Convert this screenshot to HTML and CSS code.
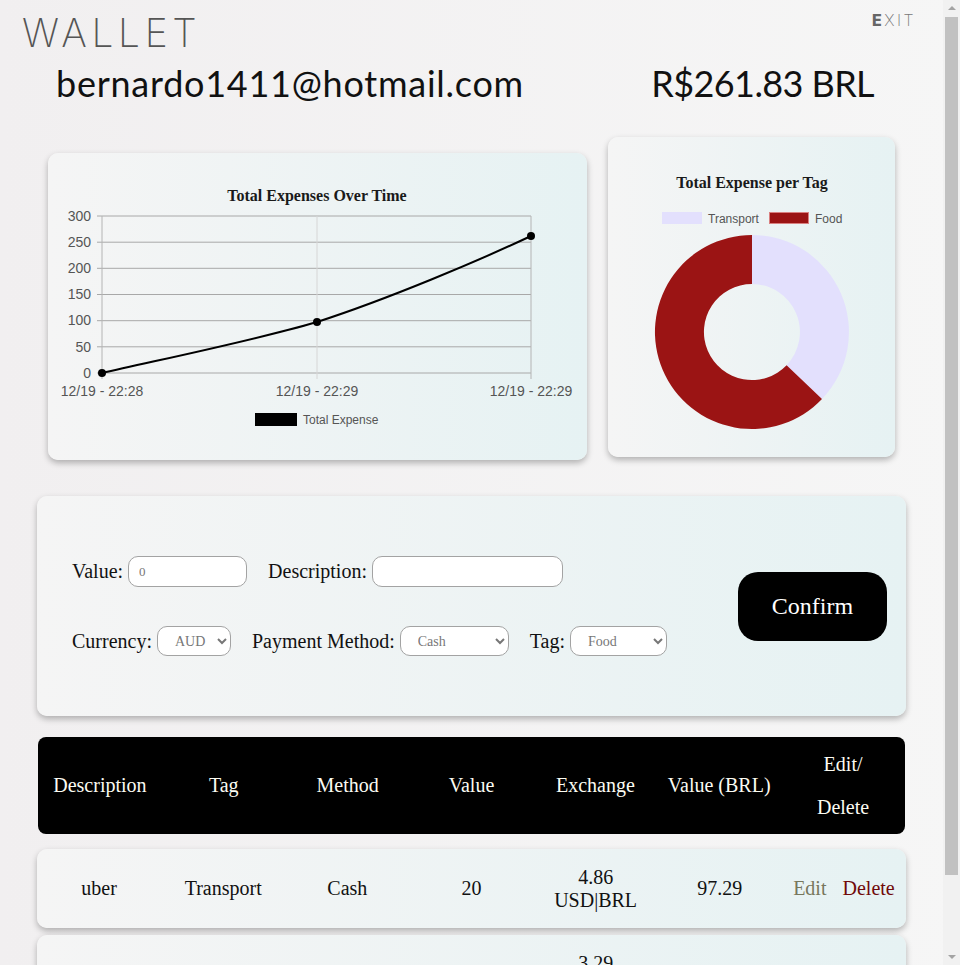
FILE: index.html
```html
<!DOCTYPE html>
<html lang="en">
<head>
<meta charset="utf-8">
<title>Wallet</title>
<link rel="stylesheet" href="styles.css">
</head>
<body>
<main class="page">
<header class="top">
  <h1 class="logo">WALLET</h1>
  <button class="exit" type="button">EXIT</button>
</header>

<section class="summary">
  <p class="email">bernardo1411@hotmail.com</p>
  <p class="total">R$261.83 BRL</p>
</section>

<section class="charts">
  <div class="card chart-line">
    <svg width="539" height="307" viewBox="0 0 539 307">
      <text x="269" y="48" class="chart-title" text-anchor="middle">Total Expenses Over Time</text>
      <g class="grid-h">
        <line x1="49" y1="63" x2="483" y2="63"/>
        <line x1="49" y1="89.2" x2="483" y2="89.2"/>
        <line x1="49" y1="115.3" x2="483" y2="115.3"/>
        <line x1="49" y1="141.5" x2="483" y2="141.5"/>
        <line x1="49" y1="167.7" x2="483" y2="167.7"/>
        <line x1="49" y1="193.8" x2="483" y2="193.8"/>
        <line x1="49" y1="220" x2="483" y2="220"/>
      </g>
      <g class="grid-v">
        <line x1="54" y1="63" x2="54" y2="226" class="edge"/>
        <line x1="269" y1="63" x2="269" y2="226"/>
        <line x1="483" y1="63" x2="483" y2="226" class="edge"/>
      </g>
      <g class="tick" text-anchor="end">
        <text x="43" y="68">300</text>
        <text x="43" y="94">250</text>
        <text x="43" y="120">200</text>
        <text x="43" y="146">150</text>
        <text x="43" y="172">100</text>
        <text x="43" y="199">50</text>
        <text x="43" y="225">0</text>
      </g>
      <g class="tick" text-anchor="middle">
        <text x="54" y="243">12/19 - 22:28</text>
        <text x="269" y="243">12/19 - 22:29</text>
        <text x="483" y="243">12/19 - 22:29</text>
      </g>
      <path class="data-line" d="M54 220 C110 207 200 189 269 169 C340 146 430 108 483 83"/>
      <circle cx="54" cy="220" r="4"/>
      <circle cx="269" cy="169" r="4"/>
      <circle cx="483" cy="83" r="4"/>
      <rect x="207" y="260" width="42" height="13" fill="#000"/>
      <text x="255" y="271" class="legend">Total Expense</text>
    </svg>
  </div>
  <div class="card chart-donut">
    <svg width="287" height="320" viewBox="0 0 287 320">
      <text x="144" y="51" class="chart-title" text-anchor="middle">Total Expense per Tag</text>
      <rect x="54" y="75" width="40" height="12" fill="#e3e0fd"/>
      <text x="100" y="86" class="legend">Transport</text>
      <rect x="161.5" y="75.5" width="39" height="11" fill="#9b1414" stroke="#d98080"/>
      <text x="207" y="86" class="legend">Food</text>
      <path fill="#e3e0fd" d="M144 98 A97 97 0 0 1 214 262.1 L178.6 228.2 A48 48 0 0 0 144 147 Z"/>
      <path fill="#9b1414" d="M214 262.1 A97 97 0 1 1 144 98 L144 147 A48 48 0 1 0 178.6 228.2 Z"/>
    </svg>
  </div>
</section>

<form class="card expense-form">
  <div class="fields">
    <div class="field-row">
      <label class="field">Value: <input class="input input-value" type="text" value="0"></label>
      <label class="field">Description: <input class="input input-desc" type="text"></label>
    </div>
    <div class="field-row">
      <label class="field">Currency:
        <select class="select select-currency"><option>AUD</option></select>
      </label>
      <label class="field">Payment Method:
        <select class="select select-method"><option>Cash</option></select>
      </label>
      <label class="field">Tag:
        <select class="select select-tag"><option>Food</option></select>
      </label>
    </div>
  </div>
  <button class="confirm" type="button">Confirm</button>
</form>

<section class="table">
  <div class="thead">
    <div class="th">Description</div>
    <div class="th">Tag</div>
    <div class="th">Method</div>
    <div class="th">Value</div>
    <div class="th">Exchange</div>
    <div class="th">Value (BRL)</div>
    <div class="th th-actions">Edit/<br>Delete</div>
  </div>
  <div class="card trow">
    <div class="td">uber</div>
    <div class="td">Transport</div>
    <div class="td">Cash</div>
    <div class="td">20</div>
    <div class="td td-exchange">4.86 USD|BRL</div>
    <div class="td">97.29</div>
    <div class="td td-actions"><span class="edit">Edit</span><span class="delete">Delete</span></div>
  </div>
  <div class="card trow">
    <div class="td">test</div>
    <div class="td">Food</div>
    <div class="td">Cash</div>
    <div class="td">50</div>
    <div class="td td-exchange">3.29 USD|BRL</div>
    <div class="td">164.53</div>
    <div class="td td-actions"><span class="edit">Edit</span><span class="delete">Delete</span></div>
  </div>
</section>
</main>

<div class="scrollbar" aria-hidden="true">
  <span class="arrow arrow-up"></span>
  <span class="thumb"></span>
  <span class="arrow arrow-down"></span>
</div>
</body>
</html>
```

FILE: styles.css
```css
* { box-sizing: border-box; }

html, body {
  margin: 0;
  padding: 0;
}

body {
  background: linear-gradient(to right, #f1eff0, #f6f6f6);
  font-family: "Liberation Serif", "Times New Roman", serif;
  color: #111;
}

.page {
  width: 943px;
  padding-bottom: 40px;
}

/* browser scrollbar look-alike, pinned over the right edge */
.scrollbar {
  position: fixed;
  top: 0;
  right: 0;
  width: 17px;
  height: 100vh;
  background: #f1f1f1;
  display: flex;
  flex-direction: column;
  align-items: center;
}
.arrow {
  width: 0;
  height: 0;
  border-left: 4px solid transparent;
  border-right: 4px solid transparent;
}
.arrow-up {
  margin-top: 6px;
  border-bottom: 4px solid #a3a3a3;
}
.arrow-down {
  margin-top: auto;
  margin-bottom: 6px;
  border-top: 4px solid #a3a3a3;
}
.thumb {
  width: 13px;
  height: 858px;
  margin-top: 7px;
  background: #c1c1c1;
}

.top {
  display: flex;
  justify-content: space-between;
  align-items: flex-start;
  padding: 10px 27px 0 22px;
  height: 56px;
}

.logo {
  margin: 0;
  font-family: Inter, "Liberation Sans", sans-serif;
  font-weight: 200;
  font-size: 39px;
  line-height: 46px;
  letter-spacing: 4.6px;
  color: #555;
}

.exit {
  border: none;
  background: none;
  padding: 0;
  margin-top: 0;
  font-family: Inter, "Liberation Sans", sans-serif;
  font-weight: 200;
  font-size: 16px;
  letter-spacing: 2.5px;
  color: #777;
}
.exit::first-letter {
  font-weight: 800;
  color: #666;
}

.summary {
  display: flex;
  justify-content: space-between;
  align-items: center;
  padding: 0 69px 0 56px;
  height: 54px;
}
.summary p {
  margin: 0;
  font-family: Lato, "Open Sans", sans-serif;
  font-size: 36px;
  color: #111;
}
.email { letter-spacing: 0.75px; }
.total { letter-spacing: -0.6px; }

.charts {
  display: flex;
  gap: 21px;
  align-items: flex-start;
  padding: 0 48px;
  margin-top: 27px;
}

.card {
  background: linear-gradient(to right, #f5f5f5, #e6f2f3);
  border-radius: 10px;
  box-shadow: 0 3px 6px rgba(0, 0, 0, 0.28);
}

.chart-line {
  width: 539px;
  height: 307px;
  margin-top: 16px;
}
.chart-donut {
  width: 287px;
  height: 320px;
}
.card svg { display: block; }

.chart-title {
  font-family: "Liberation Serif", serif;
  font-weight: bold;
  font-size: 16px;
  fill: #1a1a1a;
}
.grid-h line { stroke: #a8a8a8; stroke-width: 1; }
.grid-v line { stroke: #d6d6d6; stroke-width: 1; }
.grid-v line.edge { stroke: #b4b4b4; }
.tick {
  font-family: "Liberation Sans", Arial, sans-serif;
  font-size: 14px;
  fill: #555;
}
.legend {
  font-family: "Liberation Sans", Arial, sans-serif;
  font-size: 12px;
  fill: #555;
}
.data-line {
  fill: none;
  stroke: #000;
  stroke-width: 2;
}
.chart-line circle { fill: #000; }

.expense-form {
  display: flex;
  align-items: center;
  justify-content: space-between;
  margin: 36px 37px 0;
  height: 220px;
  padding: 0 19px 0 35px;
}
.fields {
  display: flex;
  flex-direction: column;
  gap: 39px;
}
.field-row {
  display: flex;
  gap: 21px;
  align-items: center;
}
.field {
  display: inline-flex;
  align-items: center;
  gap: 5px;
  font-size: 20px;
  color: #111;
}
.input, .select {
  border: 1px solid #a3a3a3;
  border-radius: 10px;
  background: #fff;
  font-family: "Liberation Serif", serif;
  color: #777;
}
.input {
  height: 31px;
  padding: 0 10px;
  font-size: 13px;
}
.input-value { width: 119px; }
.input-desc { width: 191px; }
.select {
  height: 30px;
  padding: 0 6px 0 13px;
  font-size: 14px;
}
.select-currency { width: 74px; }
.select-method { width: 109px; }
.select-tag { width: 97px; }

.confirm {
  width: 149px;
  height: 69px;
  border: none;
  border-radius: 20px;
  background: #000;
  color: #fff;
  font-family: "Liberation Serif", serif;
  font-size: 24px;
}

.table {
  margin: 21px 37px 0;
}
.thead {
  display: grid;
  grid-template-columns: repeat(7, 1fr);
  align-items: center;
  height: 97px;
  margin: 0 1px;
  background: #000;
  border-radius: 8px;
  color: #fbfbf2;
  font-size: 20px;
  text-align: center;
}
.th-actions { line-height: 43px; }

.trow {
  display: grid;
  grid-template-columns: repeat(7, 1fr);
  align-items: center;
  height: 79px;
  margin-top: 7px;
  font-size: 20px;
  text-align: center;
}
.thead + .trow { margin-top: 15px; }
.td { padding: 0 8px; }
.td-actions {
  display: flex;
  justify-content: center;
  gap: 16px;
  padding: 0;
}
.edit { color: #77775c; }
.delete { color: #700909; }
```
